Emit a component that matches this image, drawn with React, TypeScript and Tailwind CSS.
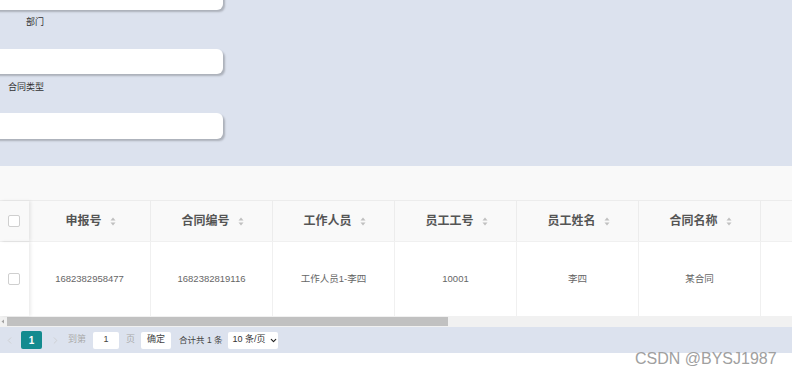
import React from 'react';
import { ChevronDown, ChevronLeft, ChevronRight } from 'lucide-react';

const COLUMNS = ['申报号', '合同编号', '工作人员', '员工工号', '员工姓名', '合同名称', ''];
const ROW = ['1682382958477', '1682382819116', '工作人员1-李四', '10001', '李四', '某合同', ''];

const SortIcon = () => (
  <svg width="6" height="9" viewBox="0 0 6 9" className="ml-[8px] shrink-0">
    <path d="M3 0.5 L5.5 3.5 L0.5 3.5 Z" fill="#c0c0c0" />
    <path d="M3 8.5 L5.5 5.5 L0.5 5.5 Z" fill="#c0c0c0" />
  </svg>
);

const FormInput = ({ className }: { className: string }) => (
  <div className={`-ml-[20px] w-[243px] rounded-[6px] bg-white shadow-[2px_2px_2px_rgba(0,0,0,0.22)] ${className}`} />
);

const FormLabel = ({ text, className }: { text: string; className: string }) => (
  <div className={`w-[44px] text-right text-[9px] leading-[12px] text-[#333] ${className}`}>{text}</div>
);

const App: React.FC = () => {
  return (
    <div
      className="relative w-[792px] h-[374px] overflow-hidden bg-white"
      style={{ fontFamily: '"Liberation Sans", "Noto Sans CJK SC", sans-serif' }}
    >
      {/* Search form */}
      <div className="h-[166px] bg-[#dce2ee] flex flex-col overflow-hidden">
        <FormInput className="h-[25px] -mt-[15px] shrink-0" />
        <FormLabel text="部门" className="mt-[6px]" />
        <FormInput className="h-[25px] mt-[21px] shrink-0" />
        <FormLabel text="合同类型" className="mt-[7px]" />
        <FormInput className="h-[26px] mt-[20px] shrink-0" />
      </div>

      {/* Toolbar strip */}
      <div className="h-[34px] bg-[#f9f9f9]" />

      {/* Table */}
      <div className="border-t border-[#ececec]">
        <div className="flex h-[40px] bg-[#f9f9f9]">
          <div className="w-[29px] shrink-0 flex items-center justify-center pr-[1px] shadow-[2px_0_3px_rgba(0,0,0,0.08)] z-10">
            <div className="w-[12px] h-[12px] border border-[#cfcfcf] rounded-[2px] bg-white" />
          </div>
          {COLUMNS.map((c, i) => (
            <div
              key={i}
              className={`shrink-0 flex items-center justify-center pl-[2px] border-r border-[#ececec] ${i === 6 ? 'w-[40px]' : 'w-[122px]'}`}
            >
              {c && (
                <>
                  <span className="text-[12px] font-bold text-[#555]">{c}</span>
                  <SortIcon />
                </>
              )}
            </div>
          ))}
        </div>
        <div className="flex h-[75px] bg-white border-t border-[#f0f0f0]">
          <div className="w-[29px] shrink-0 flex items-center justify-center pr-[1px] shadow-[2px_0_3px_rgba(0,0,0,0.08)] z-10">
            <div className="w-[12px] h-[12px] border border-[#cfcfcf] rounded-[2px] bg-white" />
          </div>
          {ROW.map((v, i) => (
            <div
              key={i}
              className={`shrink-0 flex items-center justify-center border-r border-[#f0f0f0] text-[9.5px] text-[#666] ${i === 6 ? 'w-[40px]' : 'w-[122px]'}`}
            >
              {v}
            </div>
          ))}
        </div>
        {/* Horizontal scrollbar */}
        <div className="flex items-center h-[11px] bg-[#f1f1f1]">
          <svg width="6" height="11" viewBox="0 0 6 11" className="shrink-0">
            <path d="M4 3.5 L1.5 5.5 L4 7.5 Z" fill="#a3a3a3" />
          </svg>
          <div className="ml-[1px] w-[441px] h-[9px] bg-[#c1c1c1]" />
        </div>
      </div>

      {/* Pagination */}
      <div className="h-[26px] bg-[#dce2ee] flex items-center text-[9px]">
        <ChevronLeft size={11} strokeWidth={1.5} className="ml-[4px] text-[#c8c8c8]" />
        <div className="ml-[6px] w-[21px] h-[18px] rounded-[2px] bg-[#138b8f] text-white text-[10px] font-bold flex items-center justify-center">
          1
        </div>
        <ChevronRight size={11} strokeWidth={1.5} className="ml-[8px] text-[#c8c8c8]" />
        <span className="ml-[7px] text-[#aaa]">到第</span>
        <div className="ml-[7px] w-[26px] h-[17px] bg-white rounded-[2px] flex items-center justify-center text-[#444]">
          1
        </div>
        <span className="ml-[7px] text-[#aaa]">页</span>
        <div className="ml-[6px] w-[30px] h-[17px] bg-white rounded-[2px] flex items-center justify-center text-[#444]">
          确定
        </div>
        <span className="ml-[8px] text-[8.5px] text-[#444]">合计共 1 条</span>
        <div className="ml-[6px] w-[50px] h-[17px] bg-white rounded-[2px] flex items-center pl-[4px] text-[#333]">
          10 条/页
          <ChevronDown size={9} strokeWidth={3} className="ml-[3px] text-[#222]" />
        </div>
      </div>

      {/* Watermark */}
      <div className="absolute left-[635px] top-[349px] text-[16px] leading-[19px] text-[#a0a0a0]">
        CSDN @BYSJ1987
      </div>
    </div>
  );
};

export default App;
